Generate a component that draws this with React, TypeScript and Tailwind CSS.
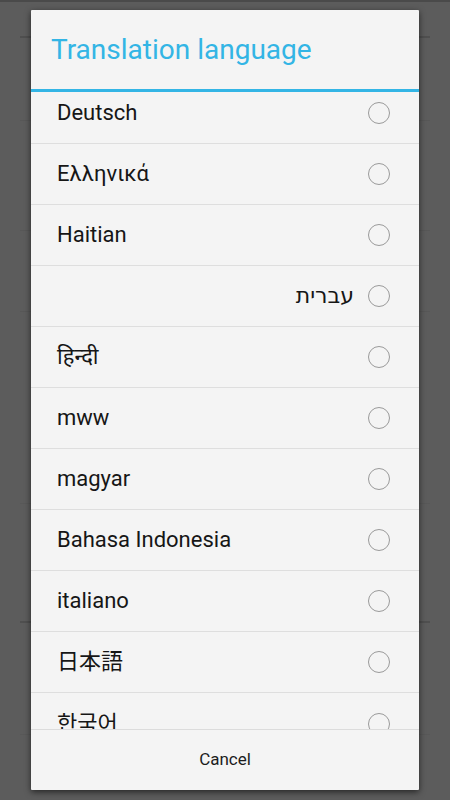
const langs = [
  { name: 'Deutsch' },
  { name: 'Ελληνικά' },
  { name: 'Haitian' },
  { name: 'עברית', rtl: true },
  { name: 'हिन्दी' },
  { name: 'mww' },
  { name: 'magyar' },
  { name: 'Bahasa Indonesia' },
  { name: 'italiano' },
  { name: '日本語' },
  { name: '한국어' },
];

function Radio() {
  return <div className="w-[22px] h-[22px] rounded-full border-[1.5px] border-[#9a9a9a] shrink-0" />;
}

export default function App() {
  return (
    <div
      className="relative w-[450px] h-[800px] bg-[#5c5c5c] overflow-hidden"
      style={{ fontFamily: 'Roboto, "Noto Sans", "DejaVu Sans", "Noto Sans CJK JP", "Noto Sans CJK KR", sans-serif' }}
    >
      {/* dimmed page behind the dialog */}
      <div className="h-[2px] bg-[#4a4a4a]" />
      <div className="px-5 flex flex-col">
        <div className="h-[36px] border-b-2 border-[#4f4f4f]" />
        <div className="h-[83px] border-b border-[#575757]" />
        <div className="h-[110px] border-b border-[#575757]" />
        <div className="h-[81px] border-b border-[#575757]" />
        <div className="h-[192px] border-b border-[#585858]" />
        <div className="h-[119px] border-b-2 border-[#4f4f4f]" />
        <div className="h-[112px] border-b border-[#585858]" />
      </div>

      {/* dialog */}
      <div className="absolute left-[31px] top-[10px] w-[388px] h-[780px] bg-[#f4f4f4] flex flex-col shadow-[0_2px_6px_rgba(0,0,0,0.6)] rounded-[1px]">
        <div className="h-[79px] flex items-center pl-5 shrink-0">
          <span className="text-[28px] text-[#33b5e5] leading-none">Translation language</span>
        </div>
        <div className="h-[3px] bg-[#33b5e5] shrink-0" />
        <div className="flex-1 overflow-hidden border-b border-[#dcdcdc]">
          <div className="-mt-[9px]">
            {langs.map((l, i) => (
              <div
                key={l.name}
                className={`h-[61px] flex items-center pl-[26px] pr-[29px] ${i < langs.length - 1 ? 'border-b border-[#dedede]' : ''}`}
              >
                <div className={`flex-1 text-[22px] leading-none text-[#161616] ${l.rtl ? 'text-right pr-[14px]' : ''}`}>
                  {l.name}
                </div>
                <Radio />
              </div>
            ))}
          </div>
        </div>
        <div className="h-[60px] flex items-center justify-center shrink-0">
          <span className="text-[17px] text-[#1c1c1c]">Cancel</span>
        </div>
      </div>
    </div>
  );
}
